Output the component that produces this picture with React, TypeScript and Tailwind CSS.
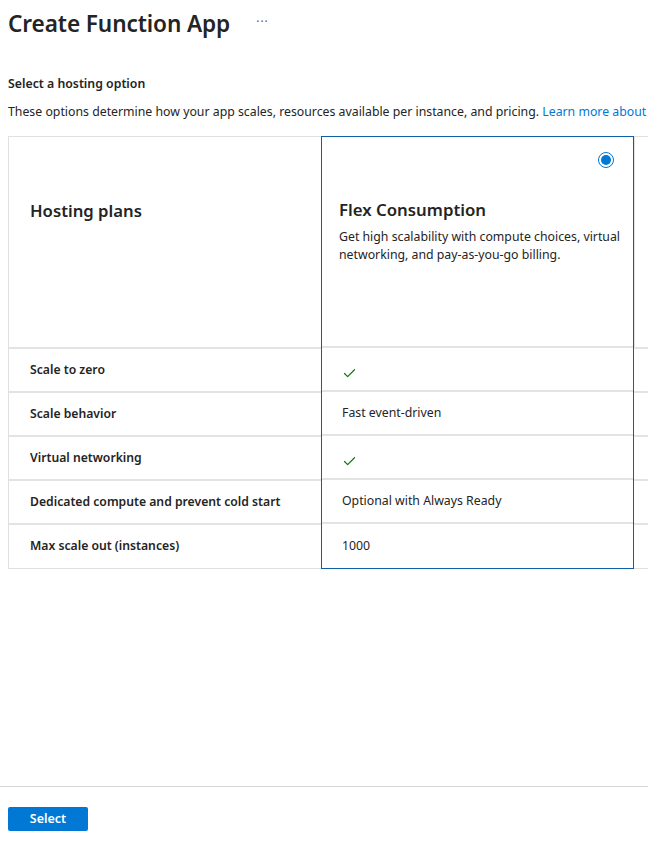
import { Check } from "lucide-react";

const rows = [
  { label: "Scale to zero", value: "check" },
  { label: "Scale behavior", value: "Fast event-driven" },
  { label: "Virtual networking", value: "check" },
  { label: "Dedicated compute and prevent cold start", value: "Optional with Always Ready" },
  { label: "Max scale out (instances)", value: "1000" },
];

export default function App() {
  return (
    <div
      className="relative h-[846px] w-[648px] overflow-hidden bg-white text-[#242424]"
      style={{ fontFamily: '"Segoe UI", "Noto Sans", "Open Sans", sans-serif' }}
    >
      {/* Header */}
      <div className="flex items-center gap-[26px] px-2 pt-[6px]">
        <h1 className="text-[22.6px] font-semibold leading-[36px] tracking-[-0.1px]">Create Function App</h1>
        <span className="pb-1 text-[12px] tracking-[1px] text-[#605e5c]">···</span>
      </div>

      <div className="px-2 pt-[32px]">
        <h2 className="text-[12.3px] font-semibold leading-[20px]">Select a hosting option</h2>
        <p className="mt-[8px] whitespace-nowrap text-[12.3px] leading-[20px]">
          These options determine how your app scales, resources available per instance, and pricing.{" "}
          <span className="text-[#0078d4]">Learn more about Flex Consumption</span>
        </p>
      </div>

      {/* Comparison table */}
      <div className="ml-2 mt-[14px] flex w-[960px] border-l border-[#e0e0e0]">
        {/* Labels column */}
        <div className="w-[312px] shrink-0 border-t border-[#e0e0e0]">
          <div className="h-[212px] border-b-2 border-[#e3e3e3] pl-[21px] pt-[62px]">
            <span className="text-[16.7px] font-semibold leading-[24px]">Hosting plans</span>
          </div>
          {rows.map((r, i) => (
            <div
              key={r.label}
              className={
                "flex h-[44px] items-center pl-[21px] text-[12.2px] font-semibold " +
                (i < rows.length - 1 ? "border-b-2 border-[#e3e3e3]" : "border-b border-[#e0e0e0]")
              }
            >
              {r.label}
            </div>
          ))}
        </div>

        {/* Selected plan column */}
        <div className="w-[313px] shrink-0 border border-[#0f5ea8]">
          <div className="relative h-[211px] border-b-2 border-[#e3e3e3] pl-[17px] pr-[6px] pt-[61px]">
            <span className="absolute right-[19px] top-[15px] flex h-[16px] w-[16px] items-center justify-center rounded-full border-[1.5px] border-[#0078d4]">
              <span className="h-[10px] w-[10px] rounded-full bg-[#0078d4]" />
            </span>
            <h3 className="text-[16.8px] font-semibold leading-[24px]">Flex Consumption</h3>
            <p className="mt-[6px] text-[12.3px] leading-[18px]">
              Get high scalability with compute choices, virtual networking, and pay-as-you-go billing.
            </p>
          </div>
          {rows.map((r, i) => (
            <div
              key={r.label}
              className={
                "flex h-[44px] items-center pl-[20px] text-[12.3px] " +
                (i < rows.length - 1 ? "border-b-2 border-[#e3e3e3]" : "")
              }
            >
              {r.value === "check" ? (
                <Check className="mt-[8px] h-[15px] w-[15px] text-[#107c10]" strokeWidth={2} />
              ) : (
                r.value
              )}
            </div>
          ))}
        </div>

        {/* Next plan column, cut off */}
        <div className="w-[313px] shrink-0 border-t border-[#e0e0e0]">
          <div className="h-[212px] border-b-2 border-l border-[#e3e3e3]" />
          {rows.map((r, i) => (
            <div
              key={r.label}
              className={
                "h-[44px] " + (i < rows.length - 1 ? "border-b-2 border-[#e3e3e3]" : "border-b border-[#e0e0e0]")
              }
            />
          ))}
        </div>
      </div>

      {/* Footer */}
      <div className="absolute bottom-0 left-0 right-0 h-[60px] border-t border-[#d6d6d6] bg-white">
        <button className="ml-2 mt-[20px] h-[24px] w-[80px] rounded-[2px] bg-[#0078d4] text-[12.5px] font-semibold text-white">
          Select
        </button>
      </div>
    </div>
  );
}
